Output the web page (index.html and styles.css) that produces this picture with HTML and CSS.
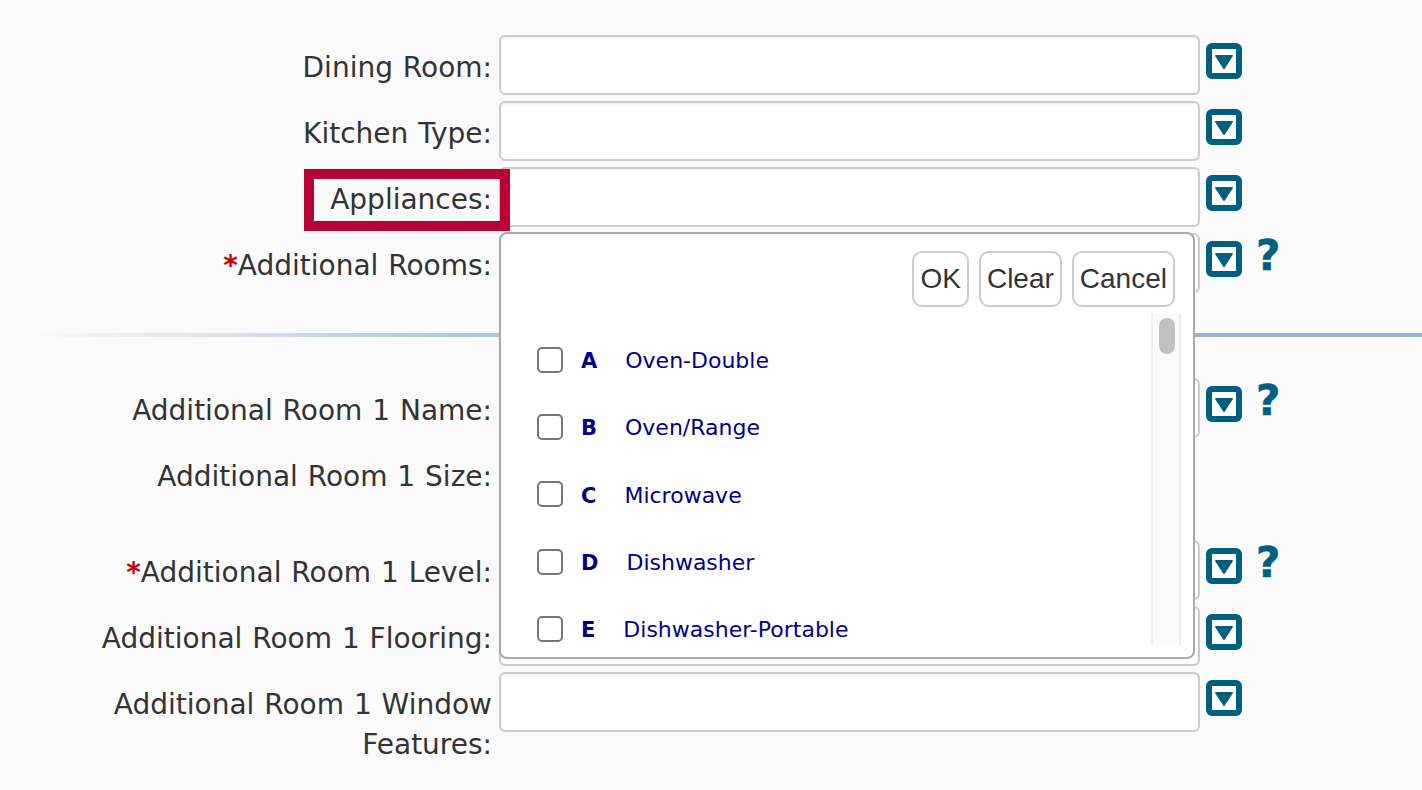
FILE: index.html
```html
<!DOCTYPE html>
<html lang="en">
<head>
<meta charset="utf-8">
<title>Rooms</title>
<link rel="stylesheet" href="styles.css">
</head>
<body>
<svg class="defs" width="0" height="0" aria-hidden="true"><symbol id="drop" viewBox="0 0 36 36"><rect x="3" y="3" width="30" height="30" rx="3" fill="#fff" stroke="#005f7f" stroke-width="6"/><path d="M9.800 12h16.400a.8.8 0 0 1 .6 1.300l-8 12.200a1 1 0 0 1-1.600 0l-8-12.200a.8.8 0 0 1 .6-1.300z" fill="#005f7f"/></symbol></svg>
<main class="form">
  <section class="group">
    <div class="row"><label class="label">Dining Room:</label><div class="field"></div><button class="drop"><svg width="36" height="36"><use href="#drop"/></svg></button></div>
    <div class="row"><label class="label">Kitchen Type:</label><div class="field"></div><button class="drop"><svg width="36" height="36"><use href="#drop"/></svg></button></div>
    <div class="row"><label class="label"><span class="marked">Appliances:<span class="highlight"></span></span></label>
      <div class="field anchor">
        <div class="popup">
          <div class="actions"><button class="act">OK</button><button class="act">Clear</button><button class="act">Cancel</button></div>
          <div class="listwrap">
            <ul class="list">
              <li class="item"><span class="box"></span><span class="text"><b class="code">A</b>Oven-Double</span></li>
              <li class="item"><span class="box"></span><span class="text"><b class="code">B</b>Oven/Range</span></li>
              <li class="item"><span class="box"></span><span class="text"><b class="code">C</b>Microwave</span></li>
              <li class="item"><span class="box"></span><span class="text"><b class="code">D</b>Dishwasher</span></li>
              <li class="item"><span class="box"></span><span class="text"><b class="code">E</b>Dishwasher-Portable</span></li>
            </ul>
            <div class="track"><div class="thumb"></div></div>
          </div>
        </div>
      </div>
      <button class="drop"><svg width="36" height="36"><use href="#drop"/></svg></button></div>
    <div class="row"><label class="label"><span class="req">*</span>Additional Rooms:</label><div class="field"></div><button class="drop"><svg width="36" height="36"><use href="#drop"/></svg></button><span class="help">?</span></div>
  </section>
  <hr class="rule">
  <section class="group">
    <div class="row"><label class="label">Additional Room 1 Name:</label><div class="field"></div><button class="drop"><svg width="36" height="36"><use href="#drop"/></svg></button><span class="help">?</span></div>
    <div class="row tall"><label class="label">Additional Room 1 Size:</label></div>
    <div class="row"><label class="label"><span class="req">*</span>Additional Room 1 Level:</label><div class="field"></div><button class="drop"><svg width="36" height="36"><use href="#drop"/></svg></button><span class="help">?</span></div>
    <div class="row"><label class="label">Additional Room 1 Flooring:</label><div class="field"></div><button class="drop"><svg width="36" height="36"><use href="#drop"/></svg></button></div>
    <div class="row"><label class="label">Additional Room 1 Window Features:</label><div class="field"></div><button class="drop"><svg width="36" height="36"><use href="#drop"/></svg></button></div>
  </section>
</main>
</body>
</html>
```
FILE: styles.css
```css
* { box-sizing: border-box; }
html, body { height: 100%; }
body {
  margin: 0;
  background: #fafafa;
  color: #333;
  font-family: "DejaVu Sans", Verdana, sans-serif;
  overflow: hidden;
}
.defs { position: absolute; }
.form { padding-top: 35px; }
.group { display: flex; flex-direction: column; gap: 6px; }
.row { display: flex; align-items: flex-start; height: 60px; }
.row.tall { height: 90px; }
.label {
  flex: none;
  width: 492px;
  padding: 13px 0 0 100px;
  text-align: right;
  font-size: 28px;
  line-height: 40px;
  word-spacing: 1px;
}
.req { color: #c00; font-weight: bold; }
.marked { position: relative; display: inline-block; }
.highlight {
  position: absolute;
  top: -11px;
  bottom: -11px;
  left: -26px;
  right: -18px;
  border: 10px solid #b90037;
  z-index: 3;
}
.field {
  flex: none;
  width: 701px;
  height: 60px;
  margin-left: 7px;
  background: #fff;
  border: 2px solid #ccc;
  border-radius: 6px;
  box-shadow: inset 0 1px 3px rgba(0,0,0,.08);
}
.anchor { position: relative; }
.drop {
  flex: none;
  width: 36px;
  height: 36px;
  margin: 8px 0 0 6px;
  padding: 0;
  border: 0;
  background: none;
  display: block;
}
.drop svg { display: block; }
.help {
  margin: -2px 0 0 14px;
  color: #005f7f;
  font: bold 42px/50px "DejaVu Sans", sans-serif;
  -webkit-text-stroke: .6px #005f7f;
}
.rule {
  height: 4px;
  margin: 40px 0 41px;
  border: 0;
  background: linear-gradient(90deg, #fafafa 30px, #aec0d6 499px, #9cb3cf 720px);
}
.popup {
  position: absolute;
  top: 63px;
  left: -2px;
  width: 696px;
  height: 427px;
  background: #fff;
  border: 2px solid #aaa;
  border-radius: 8px;
  z-index: 2;
}
.actions {
  display: flex;
  justify-content: flex-end;
  gap: 10px;
  padding: 17px 18px 0 0;
  height: 79px;
}
.act {
  height: 56px;
  padding: 0 6px;
  background: #fff;
  color: #333;
  border: 2px solid #ccc;
  border-radius: 10px;
  font: 28px "Liberation Sans", Arial, sans-serif;
}
.listwrap {
  display: flex;
  height: 332px;
  padding-right: 12px;
  overflow: hidden;
}
.list {
  flex: 1;
  margin: 0;
  padding: 14px 0 0 36px;
  list-style: none;
}
.item {
  display: flex;
  align-items: center;
  height: 67.3px;
  color: #00008b;
  font-size: 22px;
}
.box {
  flex: none;
  width: 26px;
  height: 26px;
  margin: -2px 18px 0 0;
  background: #fff;
  border: 2px solid #767676;
  border-radius: 5px;
}
.code { display: inline-block; margin-right: 28px; font-size: 21px; }
.track {
  flex: none;
  width: 30px;
  padding: 5px 6px 0;
  background: #fafafa;
  border: solid #eee;
  border-width: 0 2px;
}
.thumb { height: 36px; width: 16px; border-radius: 8px; background: #c1c1c1; }
```
